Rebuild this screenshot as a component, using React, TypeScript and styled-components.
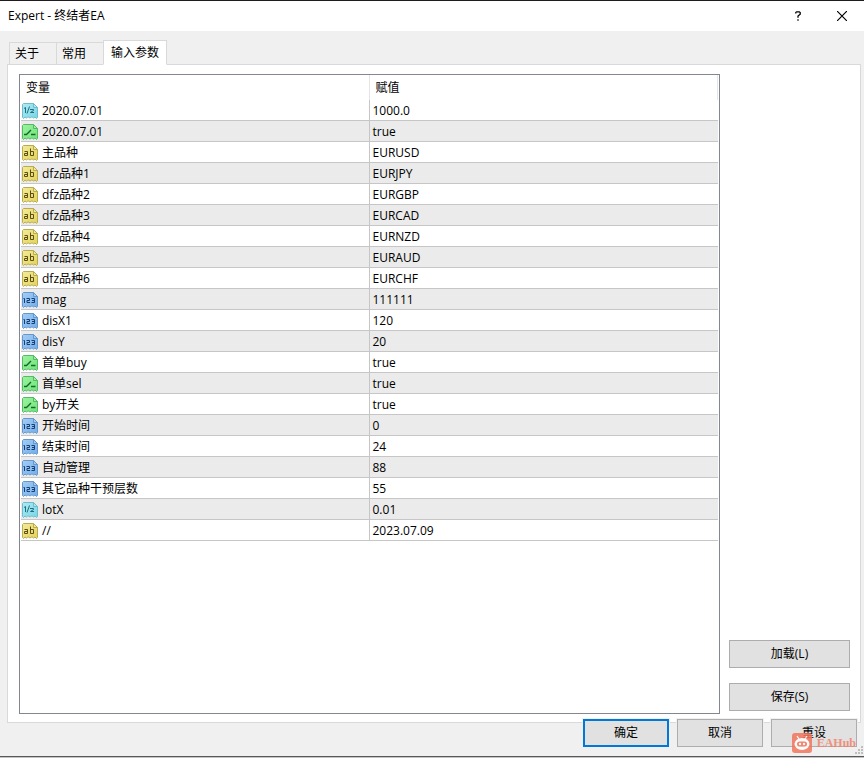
import React, { useState } from "react";
import styled, { createGlobalStyle } from "styled-components";

const GlobalStyle = createGlobalStyle`
  * { box-sizing: border-box; }
  body {
    margin: 0;
    background: #f0f0f0;
    color: #000;
    font: 12px/16px "Open Sans", "Noto Sans CJK SC", sans-serif;
  }
  button { font: inherit; color: inherit; }
`;

const Dialog = styled.div`
  position: relative;
  display: flex;
  flex-direction: column;
  min-height: 100vh;
  background: #f0f0f0;
  border-top: 1px solid #1f1c1f;
  border-bottom: 1px solid #c4c2c4;
`;

const TitleBar = styled.header`
  display: flex;
  align-items: center;
  height: 30px;
  padding-left: 8px;
  background: #fff;
`;

const Title = styled.h1`
  flex: 1;
  margin: 0;
  font-size: 12px;
  font-weight: 400;
`;

const CaptionButton = styled.button`
  display: flex;
  align-items: center;
  justify-content: center;
  width: 44px;
  height: 30px;
  padding: 0;
  border: 0;
  background: transparent;
`;

const Body = styled.main`
  flex: 1;
  display: flex;
  flex-direction: column;
  padding-top: 9px;
  border-bottom: 1px solid #59575a;
`;

const TabList = styled.div`
  display: flex;
  align-items: flex-end;
  height: 25px;
  margin-bottom: -1px;
  padding-left: 9px;
  z-index: 1;
`;

const Tab = styled.button<{ $active: boolean }>`
  height: ${(p) => (p.$active ? 25 : 23)}px;
  width: ${(p) => (p.$active ? 64 : 47)}px;
  padding: ${(p) => (p.$active ? "0" : "0 12px 0 0")};
  border: 1px solid #d9d9d9;
  border-right-width: ${(p) => (p.$active ? 1 : 0)}px;
  border-bottom-color: ${(p) => (p.$active ? "#fff" : "#d9d9d9")};
  background: ${(p) => (p.$active ? "#fff" : "#f0f0f0")};
  white-space: nowrap;
`;

const Panel = styled.section`
  flex: 1;
  display: flex;
  gap: 9px;
  margin: 0 3px 0 7px;
  padding: 9px 10px 8px 11px;
  border: 1px solid #d9d9d9;
  background: #fff;
`;

const ListBox = styled.div`
  flex: 1;
  min-width: 0;
  padding: 0 1px;
  border: 1px solid #828790;
  background: #fff;
`;

const Table = styled.table`
  width: 100%;
  table-layout: fixed;
  border-collapse: separate;
  border-spacing: 0;
`;

const HeadCell = styled.th`
  height: 25px;
  padding: 1px 6px 0;
  text-align: left;
  font-weight: 400;
  border-right: 1px solid #e5e5e5;

  &:first-child {
    width: calc(50% - 1px);
    padding-left: 5px;
  }
`;

const Row = styled.tr`
  &:nth-child(even) { background: #ebebeb; }
`;

const Cell = styled.td`
  height: 21px;
  padding: 2px 3px 0;
  border-bottom: 1px solid #c6c6c6;
  white-space: nowrap;

  &:first-child {
    padding: 2px 1px 0;
    border-right: 1px solid #c6c6c6;
  }
`;

const Variable = styled.span`
  display: flex;
  align-items: center;
  gap: 4px;
`;

const SideActions = styled.div`
  display: flex;
  flex-direction: column;
  justify-content: flex-end;
  gap: 15px;
  width: 121px;
  padding-bottom: 3px;
`;

const PushButton = styled.button<{ $primary?: boolean }>`
  height: 28px;
  padding: 0;
  border: ${(p) => (p.$primary ? "2px solid #0078d7" : "1px solid #adadad")};
  background: #e1e1e1;
`;

const Footer = styled.footer`
  display: flex;
  justify-content: flex-end;
  gap: 8px;
  margin-top: -4px;
  padding: 0 7px 9px;
  z-index: 1;

  ${PushButton} {
    width: 86px;
    box-shadow: 0 0 0 1px #f0f0f0;
  }
`;

const Watermark = styled.div`
  position: absolute;
  right: 8px;
  bottom: 4px;
  z-index: 2;
  display: flex;
  align-items: center;
  gap: 5px;
  color: #f2836c;
  opacity: 0.85;
  font: 700 12px/20px "Liberation Serif", serif;
  pointer-events: none;
`;

const Grip = styled.svg`
  position: absolute;
  right: 1px;
  bottom: 3px;
`;

type Kind = "double" | "bool" | "string" | "int";

const palette: Record<Kind, { light: string; dark: string; edge: string; ink: string }> = {
  double: { light: "#aeeaf3", dark: "#78d6e4", edge: "#71bccb", ink: "#1f6f84" },
  bool: { light: "#9df29f", dark: "#6fe47a", edge: "#57b868", ink: "#12692a" },
  string: { light: "#f3eb9a", dark: "#e3d25c", edge: "#b9ab50", ink: "#5a4f14" },
  int: { light: "#a3cdf5", dark: "#75aeea", edge: "#6597cc", ink: "#173f73" },
};

const glyphs: Record<Kind, string> = {
  double: "M2 5.5L3.5 4.5V10M7.5 3.5L5 10.5M8 6.5H11.5V7.5L8.5 9.5H12",
  bool: "M2 10.5H4.5L9 6M9 10.5H13.5",
  string: "M2.5 6.5H5.5V10.5H2.5V8.5H5.5M8.5 3.5V10.5H11.5V6.5H8.5",
  int: "M1.5 6.5H2.5V11M4.5 6.5H7.5V8.5H5V10.5H8M9.5 6.5H12.5V10.5H9.5M10 8.5H12.5",
};

function TypeIcon({ kind }: { kind: Kind }) {
  const c = palette[kind];
  const id = `fill-${kind}`;
  return (
    <svg width="16" height="16" viewBox="0 0 16 16" aria-hidden="true">
      <defs>
        <linearGradient id={id} x1="0" y1="0" x2="1" y2="1">
          <stop offset="0" stopColor={c.light} />
          <stop offset="1" stopColor={c.dark} />
        </linearGradient>
      </defs>
      <path
        d="M1.5 .5H11.5L15.5 4.5V14.5L14.5 15.5L13 14L11.5 15L10 13.8L8 15L6 13.8L4.5 15L3 14L1.5 15.5L.5 14.5V1.5Z"
        fill={`url(#${id})`}
        stroke={c.edge}
      />
      <path d="M11.5 .5V4.5H15.5Z" fill={c.light} stroke={c.edge} />
      <path d={glyphs[kind]} fill="none" stroke={c.ink} strokeWidth={kind === "bool" ? 1.4 : 1} />
    </svg>
  );
}

const parameters: [Kind, string, string][] = [
  ["double", "2020.07.01", "1000.0"],
  ["bool", "2020.07.01", "true"],
  ["string", "主品种", "EURUSD"],
  ["string", "dfz品种1", "EURJPY"],
  ["string", "dfz品种2", "EURGBP"],
  ["string", "dfz品种3", "EURCAD"],
  ["string", "dfz品种4", "EURNZD"],
  ["string", "dfz品种5", "EURAUD"],
  ["string", "dfz品种6", "EURCHF"],
  ["int", "mag", "111111"],
  ["int", "disX1", "120"],
  ["int", "disY", "20"],
  ["bool", "首单buy", "true"],
  ["bool", "首单sel", "true"],
  ["bool", "by开关", "true"],
  ["int", "开始时间", "0"],
  ["int", "结束时间", "24"],
  ["int", "自动管理", "88"],
  ["int", "其它品种干预层数", "55"],
  ["double", "lotX", "0.01"],
  ["string", "//", "2023.07.09"],
];

const tabs = ["关于", "常用", "输入参数"];

export default function App() {
  const [active, setActive] = useState(2);
  return (
    <>
      <GlobalStyle />
      <Dialog role="dialog" aria-labelledby="dialog-title">
        <TitleBar>
          <Title id="dialog-title">Expert - 终结者EA</Title>
          <CaptionButton aria-label="Help">
            <svg width="6" height="10" viewBox="0 0 6 10" aria-hidden="true">
              <path d="M.8 2.4V1.5L1.6.8H4.3L5.2 1.6V3.2L3 5V6.8M3 8.2V9.8" fill="none" stroke="#000" strokeWidth="1.3" />
            </svg>
          </CaptionButton>
          <CaptionButton aria-label="Close">
            <svg width="10" height="10" viewBox="0 0 10 10" aria-hidden="true">
              <path d="M0 0L10 10M10 0L0 10" stroke="#000" strokeWidth="1.2" />
            </svg>
          </CaptionButton>
        </TitleBar>
        <Body>
          <TabList role="tablist">
            {tabs.map((label, i) => (
              <Tab key={label} role="tab" aria-selected={i === active} $active={i === active} onClick={() => setActive(i)}>
                {label}
              </Tab>
            ))}
          </TabList>
          <Panel role="tabpanel">
            <ListBox>
              <Table>
                <thead>
                  <tr>
                    <HeadCell scope="col">变量</HeadCell>
                    <HeadCell scope="col">赋值</HeadCell>
                  </tr>
                </thead>
                <tbody>
                  {parameters.map(([kind, name, value], i) => (
                    <Row key={i}>
                      <Cell>
                        <Variable>
                          <TypeIcon kind={kind} />
                          {name}
                        </Variable>
                      </Cell>
                      <Cell>{value}</Cell>
                    </Row>
                  ))}
                </tbody>
              </Table>
            </ListBox>
            <SideActions>
              <PushButton>加载(L)</PushButton>
              <PushButton>保存(S)</PushButton>
            </SideActions>
          </Panel>
          <Footer>
            <PushButton $primary>确定</PushButton>
            <PushButton>取消</PushButton>
            <PushButton>重设</PushButton>
          </Footer>
        </Body>
        <Grip width="8" height="8" viewBox="0 0 8 8" aria-hidden="true">
          <path d="M6 0h2v2H6zM3 3h2v2H3zM6 3h2v2H6zM0 6h2v2H0zM3 6h2v2H3zM6 6h2v2H6z" fill="#bfbfbf" />
        </Grip>
        <Watermark>
          <svg width="20" height="20" viewBox="0 0 20 20" aria-hidden="true">
            <rect width="20" height="20" rx="3" fill="#f2765c" />
            <path d="M5 3l2 3M15 3l-2 3" stroke="#fff" strokeWidth="1.3" />
            <ellipse cx="10" cy="11" rx="7.5" ry="6" fill="#fff" />
            <rect x="5" y="8.5" width="10" height="5" rx="2.5" fill="#f2765c" />
            <circle cx="8" cy="11" r="1.2" fill="#fff" />
            <circle cx="12" cy="11" r="1.2" fill="#fff" />
          </svg>
          EAHub
        </Watermark>
      </Dialog>
    </>
  );
}
